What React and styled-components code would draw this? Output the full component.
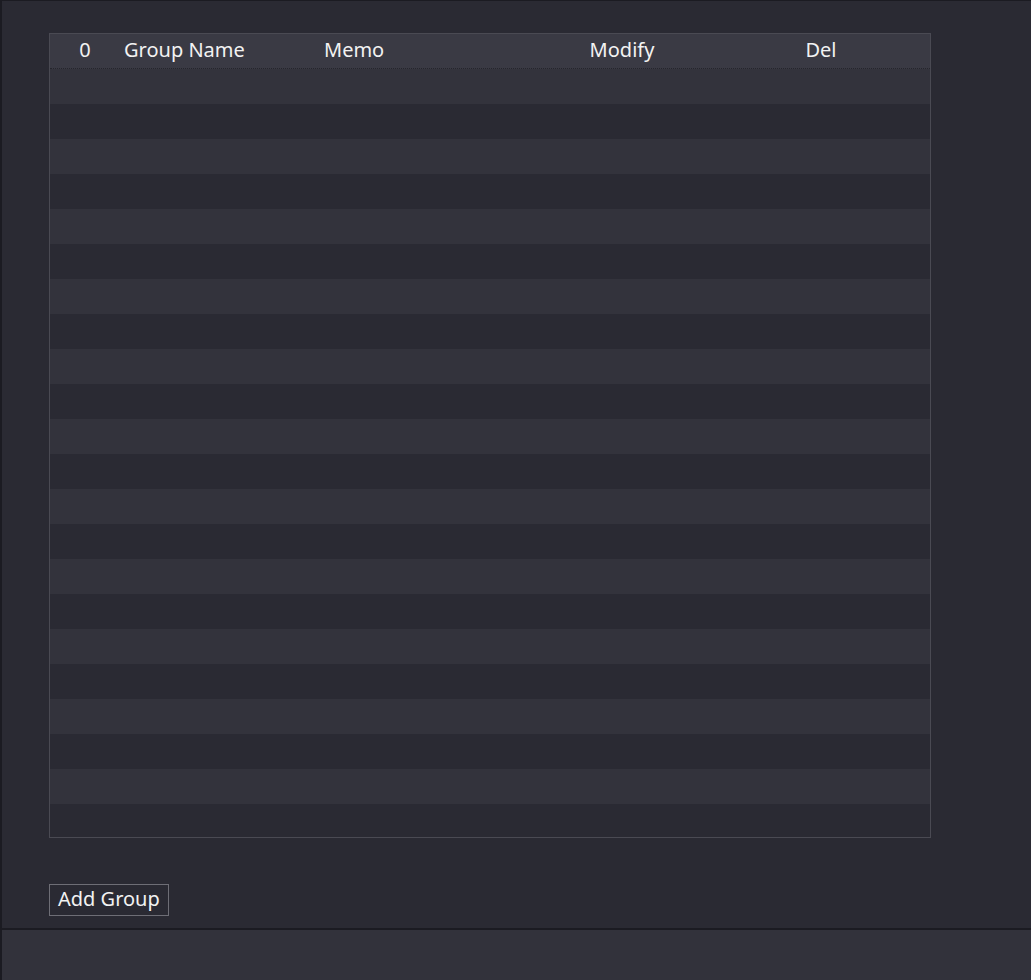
import React from 'react';
import styled, { createGlobalStyle } from 'styled-components';

const GlobalStyle = createGlobalStyle`
  html, body {
    margin: 0;
    padding: 0;
    background: #2a2a33;
  }
  body {
    font-family: 'Noto Sans', 'Open Sans', sans-serif;
  }
`;

const Page = styled.div`
  width: 1031px;
  height: 980px;
  box-sizing: border-box;
  display: flex;
  flex-direction: column;
  background: #2a2a33;
  border-top: 1px solid #1b1b22;
  border-left: 2px solid #1b1b22;
`;

const Content = styled.div`
  flex: 1;
  padding: 32px 0 0 47px;
  display: flex;
  flex-direction: column;
`;

const Table = styled.div`
  width: 882px;
  height: 805px;
  overflow: hidden;
  box-sizing: border-box;
  border: 1px solid #4a4a53;
  background: #2a2a33;
`;

const Row = styled.div`
  display: grid;
  grid-template-columns: 70px 200px 200px 204px 194px 1fr;
  height: ${props => (props.head ? '34px' : '35px')};
  align-items: center;
  background: ${props =>
    props.head ? '#3a3a44' : props.odd ? '#2a2a33' : '#33333c'};
  border-bottom: ${props => (props.head ? '1px dotted #25252c' : 'none')};
  color: #f2f2f2;
  font-size: 20px;
`;

const Cell = styled.div`
  text-align: ${props => props.align || 'left'};
  padding-left: ${props => (props.align === 'center' ? '0' : '4px')};
  white-space: nowrap;
  line-height: 1;
  padding-bottom: 2px;
`;

const Actions = styled.div`
  margin-top: 46px;
  display: flex;
`;

const Button = styled.button`
  height: 32px;
  padding: 0 8px 2px 8px;
  background: #2a2a33;
  border: 1px solid #6e6e76;
  color: #f2f2f2;
  font-family: 'Noto Sans', 'Open Sans', sans-serif;
  font-size: 20px;
  line-height: 1;
  cursor: pointer;
`;

const Footer = styled.div`
  height: 50px;
  border-top: 2px solid #1b1b22;
  background: #32323b;
`;

const rows = Array.from({ length: 22 }, (_, i) => i);

export default function App() {
  return (
    <>
      <GlobalStyle />
      <Page>
        <Content>
          <Table>
            <Row head>
              <Cell align="center">0</Cell>
              <Cell>Group Name</Cell>
              <Cell>Memo</Cell>
              <Cell align="center">Modify</Cell>
              <Cell align="center">Del</Cell>
              <Cell />
            </Row>
            {rows.map(i => (
              <Row key={i} odd={i % 2 === 1} />
            ))}
          </Table>
          <Actions>
            <Button>Add Group</Button>
          </Actions>
        </Content>
        <Footer />
      </Page>
    </>
  );
}
